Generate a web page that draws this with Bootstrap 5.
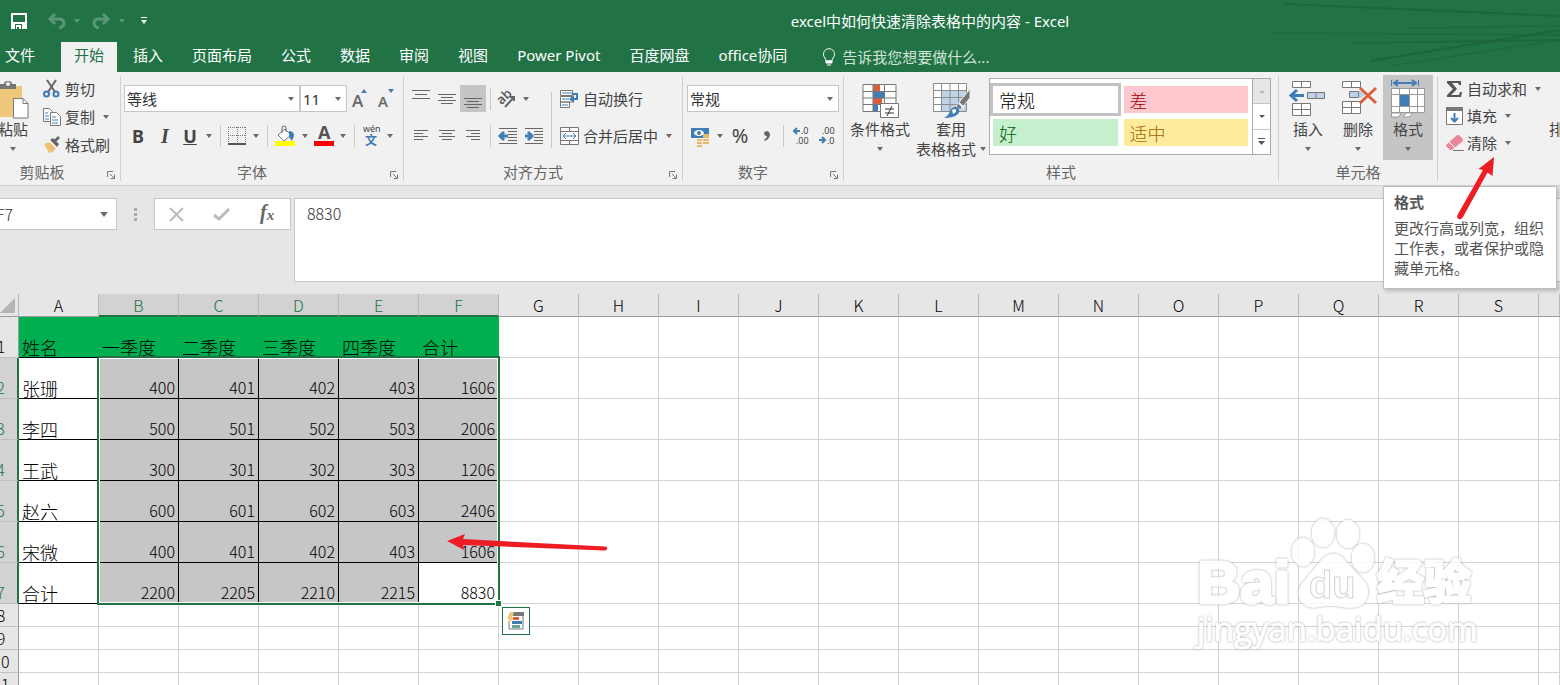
<!DOCTYPE html>
<html lang="zh-CN">
<head>
<meta charset="utf-8">
<meta name="viewport" content="width=device-width, initial-scale=1">
<title>excel中如何快速清除表格中的内容 - Excel</title>
<link href="https://cdn.jsdelivr.net/npm/bootstrap@5.3.0/dist/css/bootstrap.min.css" rel="stylesheet">
<style>
  :root { --xl-green:#217346; --xl-ink:#444; --xl-line:#d4d4d4; --xl-blue:#3f7cb8; }
  body { font-family:"Noto Sans","Noto Sans CJK SC",sans-serif; font-size:15px; line-height:20px; color:var(--xl-ink); background:#fff; }
  .app { min-height:100vh; overflow:hidden; }
  button { font:inherit; color:inherit; background:none; border:0; padding:0; }
  svg { display:block; overflow:visible; flex:none; }
  svg text { font-family:"Open Sans","Noto Sans CJK SC",sans-serif; }

  /* title bar and tabs */
  .titlebar { background:var(--xl-green); color:#fff; }
  .title-row { height:42px; }
  .quick { flex:0 0 300px; padding-left:11px; }
  .streaks { top:0; right:0; }
  .tabs { height:30px; gap:3px; }
  .tabs a, .tell { color:#fff; text-decoration:none; padding:0 13px; line-height:27px; }
  .tabs a.file { padding:0 23px 0 5px; }
  .tabs a.active { background:#f1f1f1; color:var(--xl-green); }
  .tabs .tell { color:#cfe3d7; gap:6px; padding-left:19px; }

  /* ribbon */
  .ribbon { background:#f1f1f1; height:114px; border-bottom:1px solid #d2d2d2; }
  .grp { position:relative; padding-top:3px; border-right:1px solid transparent; flex:none; }
  .grp::after { content:""; position:absolute; right:-1px; top:4px; bottom:4px; width:1px; background:#d0d0d0; }
  .grp-body { height:85px; }
  .grp-name { color:#666; line-height:24px; text-align:center; }
  .has-launch .grp-name { padding-right:20px; }
  .g-clip.has-launch .grp-name { padding-right:36px; }
  .launch { position:absolute; right:5px; bottom:6px; }
  .g-clip { width:121px; } .g-font { width:283px; } .g-align { width:279px; }
  .g-num { width:161px; } .g-style { width:435px; } .g-cells { width:159px; }
  .g-style .grp-body { padding-left:1px; padding-right:7px; }
  .g-edit::after { display:none; }
  .two-rows { padding:5px 4px 0 3px; }
  .g-align .two-rows, .g-num .two-rows { padding-left:4px; }
  .tool-row { height:37px; display:flex; align-items:center; }
  .tb { height:27px; width:26px; display:flex; align-items:center; justify-content:center; flex:none; }
  .tb-24 { width:24px; }
  .tb-28 { width:28px; }
  .tb.on { background:#c5c5c5; }
  .drop { width:14px; height:27px; display:flex; align-items:center; justify-content:center; flex:none; }
  .drop::before, .car::after { content:""; border:3px solid transparent; border-top:4px solid #6a6a6a; border-bottom:0; }
  .sep { width:9px; height:22px; flex:none; display:flex; justify-content:center; }
  .sep::before { content:""; width:1px; background:#c8c8c8; }
  .sep-long { height:56px; align-self:center; }
  .lb { display:flex; align-items:center; height:28px; gap:4px; white-space:nowrap; }
  .g-edit .lb, .g-edit .drop { height:27px; }
  .big { display:flex; flex-direction:column; align-items:center; width:50px; height:85px; padding-top:5px; white-space:nowrap; flex:none; line-height:19px; }
  .big svg { margin-bottom:2px; height:38px; }
  .big .car { height:20px; display:flex; align-items:center; }
  .big.on { background:#c5c5c5; }
  .big.w70 { width:70px; } .big.w72 { width:72px; }
  .paste { width:36px; margin-left:-5px; }
  .field { height:27px; border:1px solid #c6c6c6; border-radius:0; background-color:#fff; color:#333; font-size:15px; line-height:20px; padding:0 18px 0 2px;
    appearance:none; background-repeat:no-repeat; background-position:right 5px center; background-size:6px 4px;
    background-image:url("data:image/svg+xml,%3Csvg xmlns='http://www.w3.org/2000/svg' viewBox='0 0 6 4'%3E%3Cpath d='M0 0h6L3 4z' fill='%236a6a6a'/%3E%3C/svg%3E"); }
  .f-family { width:176px; flex:none; } .f-size { width:47px; flex:none; }
  .glyph { font-size:18px; font-weight:700; }
  .glyph-i { font-family:"Liberation Serif",serif; font-size:20px; font-style:italic; }
  .gallery { width:282px; height:77px; margin-top:3px; border:1px solid #ababab; background:#fff; }
  .swatches { display:grid; grid-template-columns:1fr 1fr; gap:6px; padding:7px 4px 7px 3px; align-content:start; }
  .swatch { height:27px; padding-left:6px; text-align:left; font-size:18px; font-weight:300; line-height:24px; color:#000; font-family:"Noto Sans CJK SC",sans-serif; }
  .swatch.sel { outline:3px solid #c2c2c2; }
  .sw-bad { background:#ffc7ce; color:#9c0006; } .sw-good { background:#c6efce; color:#006100; } .sw-mid { background:#ffeb9c; color:#9c6500; }
  .scroller { width:18px; border-left:1px solid #ababab; }
  .scroller button { flex:1; display:flex; align-items:center; justify-content:center; border-bottom:1px solid #c6c6c6; }
  .scroller button:last-child { border:0; }
  .scroller .dim { background:#e6e6e6; }
  .tip { left:104px; top:114px; width:174px; padding:5px 10px 10px; background:#fff; border:1px solid #bebebe; box-shadow:2px 2px 4px rgba(0,0,0,.2); z-index:5; color:#555; }
  .tip h2 { font-size:15px; line-height:20px; font-weight:700; margin:0 0 6px; }
  .tip p { margin:0; }
  .pointer { position:absolute; z-index:8; pointer-events:none; }

  /* formula bar */
  .fbar { background:#e6e6e6; height:108px; padding-top:12px; }
  .namebox { width:122px; margin-left:-5px; height:32px; font-family:"Noto Sans CJK SC",sans-serif; font-size:16px; padding-left:0; font-weight:300; background-position:right 8px center; background-size:8px 5px; }
  .dots { width:37px; height:32px; }
  .fx { width:137px; height:32px; background:#fff; border:1px solid #c6c6c6; }
  .formula { flex:1; min-width:0; height:84px; margin-left:3px; padding:3px 12px; border:1px solid #c6c6c6; border-right:0; resize:none; font-family:"Noto Sans CJK SC",sans-serif; font-weight:300; font-size:16px; line-height:22px; color:#333; }

  /* worksheet */
  .sheet-area { position:relative; }
  .sheet { table-layout:fixed; border-collapse:separate; border-spacing:0; width:calc(100% + 16px); margin-left:-16px; font-family:"Noto Sans CJK SC",sans-serif; font-weight:300; font-size:16px; line-height:22px; color:#000; }
  .sheet .c-num { width:35px; } .sheet .c-col { width:80px; }
  .sheet th, .sheet td { padding:0 3px; border:0 solid var(--xl-line); border-width:0 1px 1px 0; font-weight:inherit; vertical-align:bottom; white-space:nowrap; overflow:hidden; }
  .sheet thead th { height:23px; line-height:21px; background:#e6e6e6; text-align:center; vertical-align:top; padding-top:1px; border-color:#b8b8b8; border-bottom-color:#9b9b9b; position:relative; }
  .sheet thead th.hot { line-height:20px; background:#d2d2d2; color:var(--xl-green); border-bottom:2px solid var(--xl-green); }
  .sheet tbody th { height:23px; background:#e6e6e6; text-align:center; border-right-color:#9b9b9b; border-bottom-color:#c0c0c0; }
  .sheet .tall th, .sheet .tall td { height:41px; }
  .sheet .hot-row th { background:#d2d2d2; color:var(--xl-green); border-right:2px solid var(--xl-green); }
  .sheet td.word { font-size:18px; line-height:20px; }
  .sheet td.fill { background:#00b050; border-right-color:#00b050; border-bottom-color:#000; }
  .sheet td.boxed { border-color:#000; }
  .sheet td.numv { text-align:right; }
  .sheet td.pick { background:#c6c6c6; }
  .corner { position:absolute; right:3px; bottom:3px; }
  .range { left:97px; top:62px; width:403px; height:249px; border:2px solid var(--xl-green); box-shadow:inset 0 0 0 1px #fff; pointer-events:none; }
  .range::after { content:""; position:absolute; right:-4px; bottom:-4px; width:5px; height:5px; background:var(--xl-green); border:1px solid #fff; box-sizing:content-box; }
  .quick-tag { position:absolute; left:502px; top:313px; width:28px; height:28px; border:1px solid var(--xl-green); background:#fff; display:flex; align-items:center; justify-content:center; }
  .brand { position:absolute; right:80px; top:222px; pointer-events:none; opacity:.85; filter:drop-shadow(0 0 1px #999); }
  .brand text { font-weight:700; font-family:"Liberation Sans","Noto Sans CJK SC",sans-serif; }
  .brand .brand-url { font-family:"Open Sans",sans-serif; font-weight:400; }
</style>
</head>
<body>
<div class="app d-flex flex-column">

  <header class="titlebar position-relative">
    <svg class="streaks position-absolute" width="290" height="72" viewBox="0 0 290 72" fill="none" stroke="#1c613b" aria-hidden="true">
      <path d="M15 4 290 16" stroke-width="2" opacity=".8"/><path d="M2 33 290 35" stroke-width="2" opacity=".5"/><path d="M138 28 290 26" opacity=".7"/><path d="M82 43 290 40" stroke-width="2" opacity=".7"/><path d="M100 61 290 30" stroke-width="2" opacity=".8"/><path d="M120 66 290 40" opacity=".7"/>
    </svg>
    <div class="title-row d-flex align-items-center">
      <div class="quick d-flex align-items-center">
        <button aria-label="保存"><svg width="16" height="16" fill="none"><path d="M0 0h16v16H0z" fill="#fff"/><path d="M2 2h12v7H2zM4 11h7v5H4z" fill="#217346"/><path d="M5 12h5v4H8v-2H6v2H5z" fill="#fff"/></svg></button>
        <button class="ms-3 ps-1" aria-label="撤消"><svg width="19" height="16" fill="none" stroke="#599676" stroke-width="3"><path d="M3 6h9q5 0 5 4t-5 5"/><path d="M8 1 3 6l5 5"/></svg></button>
        <span class="ms-2"><svg width="6" height="4"><path d="M0 0h6L3 4z" fill="#599676"/></svg></span>
        <button class="ms-2 ps-1" aria-label="恢复"><svg width="19" height="16" fill="none" stroke="#599676" stroke-width="3"><path d="M16 6H7q-5 0-5 4t5 5"/><path d="m11 1 5 5-5 5"/></svg></button>
        <span class="ms-2"><svg width="6" height="4"><path d="M0 0h6L3 4z" fill="#599676"/></svg></span>
        <button class="ms-3" aria-label="自定义快速访问工具栏"><svg width="6" height="8"><path d="M0 0h6v1H0zM0 3h6L3 7z" fill="#fff"/></svg></button>
      </div>
      <div class="flex-fill text-center text-truncate">excel中如何快速清除表格中的内容 - Excel</div>
    </div>
    <nav class="tabs d-flex text-nowrap" aria-label="功能区选项卡">
      <a href="#" class="file">文件</a><a href="#" class="active">开始</a><a href="#">插入</a><a href="#">页面布局</a><a href="#">公式</a><a href="#">数据</a><a href="#">审阅</a><a href="#">视图</a><a href="#">Power Pivot</a><a href="#">百度网盘</a><a href="#">office协同</a>
      <button class="tell d-flex align-items-center">
        <svg width="14" height="18" fill="none" stroke="#fff"><path d="M4 13q0-2-2-4.500a5.500 5.500 0 1 1 10 0q-2 2.500-2 4.500z"/><path d="M4 13h6v2H4zM5 17h4" fill="#fff"/></svg>
        告诉我您想要做什么...</button>
    </nav>
  </header>

  <section class="ribbon d-flex" aria-label="开始">
    <div class="grp g-clip has-launch">
      <div class="grp-body d-flex">
        <button class="big paste">
          <svg width="36" height="38"><path d="M-1 6h28v31H-1z" fill="#eec77b"/><path d="M5 4h4q0-3 4-3t4 3h4v5H5z" fill="#777"/><circle cx="13" cy="4" r="2" fill="#f1f1f1"/><path d="M18.500 18.500h9.500l5 5v14.500H18.500z" fill="#fff" stroke="#777"/><path d="M28 18.500v5h5" fill="none" stroke="#777"/></svg>
          粘贴<span class="car"></span></button>
        <div class="d-flex flex-column ms-2 ps-1">
          <button class="lb"><svg width="18" height="18" fill="none" stroke="#666" stroke-width="2"><path d="m4 0 8 12M13 0 5 12"/><circle cx="3.500" cy="14" r="2.500" stroke="#3f7cb8"/><circle cx="13" cy="14" r="2.500" stroke="#3f7cb8"/></svg>剪切</button>
          <span class="d-flex"><button class="lb"><svg width="18" height="18" fill="#fff" stroke="#777"><path d="M.5.500h6l3 3v10h-9z"/><path d="M7.500 4.500h6l4 4v9h-10z"/><path d="M2 5h3M2 8h4M2 11h4M9 9h4M9 12h6M9 15h6" stroke="#3f7cb8"/></svg>复制</button><button class="drop ms-1" aria-label="复制选项"></button></span>
          <button class="lb"><svg width="18" height="18"><path d="m1 8 6-2 6 6-3 4-4 1z" fill="#eec077"/><path d="m6 5 3-2 6 6-2 3z" fill="#fff"/><path d="m7 4 3-2 6 6-2 3zM11 4l4-4 2 2-4 4z" fill="#666"/></svg>格式刷</button>
        </div>
      </div>
      <div class="grp-name">剪贴板</div>
      <button class="launch" aria-label="剪贴板设置"><svg width="8" height="8" fill="none" stroke="#777"><path d="M.5 6V.5H6M3 3l4 4M7.500 3.500v4h-4"/></svg></button>
    </div>

    <div class="grp g-font has-launch">
      <div class="grp-body two-rows">
        <div class="tool-row">
          <select class="field f-family" aria-label="字体"><option>等线</option></select>
          <select class="field f-size" aria-label="字号"><option>11</option></select>
          <button class="tb" aria-label="增大字号"><svg width="18" height="20"><text x="1" y="18" font-size="17" font-weight="600" fill="#666">A</text><path d="m10 4 3-4 3 4z" fill="#3f7cb8"/></svg></button>
          <button class="tb" aria-label="减小字号"><svg width="18" height="20"><text x="1" y="18" font-size="15" font-weight="600" fill="#666">A</text><path d="m11 0 3 4 3-4z" fill="#3f7cb8"/></svg></button>
        </div>
        <div class="tool-row">
          <button class="tb tb-28 glyph" aria-label="加粗">B</button><button class="tb glyph glyph-i" aria-label="倾斜">I</button><button class="tb tb-24 glyph text-decoration-underline" aria-label="下划线">U</button><button class="drop" aria-label="下划线选项"></button><span class="sep"></span>
          <button class="tb tb-24" aria-label="边框"><svg width="18" height="18" fill="none" stroke="#777" stroke-dasharray="1 1"><path d="M.5 0v17M9.500 0v17M17.500 0v17M0 .5h18M0 8.500h18"/><path d="M0 17h18" stroke="#555" stroke-width="2" stroke-dasharray="none"/></svg></button><button class="drop" aria-label="边框选项"></button><span class="sep"></span>
          <button class="tb" aria-label="填充颜色"><svg width="20" height="20"><path d="M10 3 3 9l6 6 7-6z" fill="#fff" stroke="#777"/><path d="M7 7V2q0-2 2-2t2 2v4" fill="none" stroke="#666"/><path d="M14 5q5 0 5 5l-2 5-3-4z" fill="#3f7cb8"/><path d="M0 15h20v5H0z" fill="#ff0"/></svg></button><button class="drop" aria-label="填充颜色选项"></button>
          <button class="tb tb-24" aria-label="字体颜色"><svg width="20" height="20"><text x="4" y="13" font-size="18" font-weight="700" fill="#555">A</text><path d="M0 15h20v5H0z" fill="red"/></svg></button><button class="drop" aria-label="字体颜色选项"></button><span class="sep"></span>
          <button class="tb tb-24" aria-label="拼音指南"><svg width="18" height="20"><text x="1" y="6" font-size="9" fill="#333">wén</text><text x="3" y="19" font-size="12" font-weight="700" fill="#3f7cb8">文</text></svg></button><button class="drop" aria-label="拼音选项"></button>
        </div>
      </div>
      <div class="grp-name">字体</div>
      <button class="launch" aria-label="字体设置"><svg width="8" height="8" fill="none" stroke="#777"><path d="M.5 6V.5H6M3 3l4 4M7.500 3.500v4h-4"/></svg></button>
    </div>

    <div class="grp g-align has-launch">
      <div class="grp-body two-rows d-flex">
        <div>
          <div class="tool-row">
            <button class="tb" aria-label="顶端对齐"><svg width="18" height="18" stroke="#666"><path d="M0 .5h18M3 4.500h12M0 8.500h18"/></svg></button>
            <button class="tb" aria-label="垂直居中"><svg width="18" height="18" stroke="#666"><path d="M0 4.500h18M3 7.500h12M0 10.500h18M3 13.500h12"/></svg></button>
            <button class="tb on" aria-label="底端对齐"><svg width="18" height="18" stroke="#666"><path d="M0 8.500h18M3 11.500h12M0 14.500h18M3 17.500h12"/></svg></button><span class="sep"></span>
            <button class="tb tb-24" aria-label="方向"><svg width="20" height="20"><text x="2" y="14" font-size="13" font-weight="600" fill="#555" transform="rotate(-45 6 12)">ab</text><path d="m8 18 9-10M13 8h4v4" fill="none" stroke="#666" stroke-width="2"/></svg></button><button class="drop" aria-label="方向选项"></button>
          </div>
          <div class="tool-row">
            <button class="tb" aria-label="左对齐"><svg width="14" height="12" stroke="#666"><path d="M0 .5h14M0 3.500h9M0 6.500h14M0 9.500h9"/></svg></button>
            <button class="tb" aria-label="居中"><svg width="16" height="12" stroke="#666"><path d="M0 .5h16M3 3.500h10M0 6.500h16M3 9.500h10"/></svg></button>
            <button class="tb" aria-label="右对齐"><svg width="14" height="12" stroke="#666"><path d="M0 .5h14M5 3.500h9M0 6.500h14M5 9.500h9"/></svg></button><span class="sep"></span>
            <button class="tb" aria-label="减少缩进量"><svg width="18" height="16" stroke="#666"><path d="M0 .5h18M9 3.500h9M9 6.500h9M9 9.500h9M9 12.500h9M0 15.500h18"/><path d="M9 8H2M5 4 1 8l4 4" fill="none" stroke="#3f7cb8" stroke-width="3"/></svg></button>
            <button class="tb" aria-label="增加缩进量"><svg width="18" height="16" stroke="#666"><path d="M0 .5h18M9 3.500h9M9 6.500h9M9 9.500h9M9 12.500h9M0 15.500h18"/><path d="M0 8h7M3 4l4 4-4 4" fill="none" stroke="#3f7cb8" stroke-width="3"/></svg></button>
          </div>
        </div>
        <span class="sep sep-long"></span>
        <div class="ps-1">
          <div class="tool-row"><button class="lb"><svg width="19" height="18" fill="#fff" stroke="#777"><path d="M.5.500h12v5H.5zM.5 6.500h12v5.500H.5zM.5 12h9v5.500h-9z"/><path d="M2 3h11M2 9h7M2 15h6" stroke="#3f7cb8"/><path d="M13 4h4v5h-5" stroke="#3f7cb8" fill="none" stroke-width="2"/><path d="m14 5-5 4 5 4z" fill="#3f7cb8" stroke="none"/></svg>自动换行</button></div>
          <div class="tool-row"><button class="lb"><svg width="19" height="18" fill="#fff" stroke="#777"><path d="M.5.500h18v17H.5zM.5 4.500h18M.5 13.500h18M9.500.500v4M9.500 13.500v4"/><path d="M3 9h13M6 6 3 9l3 3M13 6l3 3-3 3" fill="none" stroke="#3f7cb8"/></svg>合并后居中</button><button class="drop ms-1" aria-label="合并选项"></button></div>
        </div>
      </div>
      <div class="grp-name">对齐方式</div>
      <button class="launch" aria-label="对齐设置"><svg width="8" height="8" fill="none" stroke="#777"><path d="M.5 6V.5H6M3 3l4 4M7.500 3.500v4h-4"/></svg></button>
    </div>

    <div class="grp g-num has-launch">
      <div class="grp-body two-rows">
        <div class="tool-row"><select class="field w-100" aria-label="数字格式"><option>常规</option></select></div>
        <div class="tool-row">
          <button class="tb" aria-label="会计数字格式"><svg width="20" height="20"><path d="M1 2h18v10H1z" fill="#3f7cb8"/><ellipse cx="9" cy="7" rx="5" ry="3" fill="#fff"/><circle cx="9" cy="7" r="2" fill="#3f7cb8"/><path d="M13 9h6M13 11h6M13 14h6M13 17h6M7 14h5M7 17h5M7 20h5" stroke="#e8b864" stroke-width="2"/></svg></button><button class="drop" aria-label="会计格式选项"></button>
          <button class="tb" aria-label="百分比样式"><span class="fs-5">%</span></button>
          <button class="tb" aria-label="千位分隔样式"><svg width="7" height="10"><path d="M1 2q1-2 3-2t3 3q0 5-5 7l-1-1q3-2 3-4-3 0-3-3" fill="#666"/></svg></button><span class="sep"></span>
          <button class="tb" aria-label="增加小数位数"><svg width="16" height="18"><text x="8" y="7" font-size="9" fill="#333">.0</text><text x="3" y="17" font-size="9" fill="#333">.00</text><path d="M7 4H2M4 1 1 4l3 3" stroke="#3f7cb8" stroke-width="2" fill="none"/></svg></button>
          <button class="tb" aria-label="减少小数位数"><svg width="16" height="18"><text x="3" y="7" font-size="9" fill="#333">.00</text><text x="8" y="17" font-size="9" fill="#333">.0</text><path d="M0 13h5M3 10l3 3-3 3" stroke="#3f7cb8" stroke-width="2" fill="none"/></svg></button>
        </div>
      </div>
      <div class="grp-name">数字</div>
      <button class="launch" aria-label="数字设置"><svg width="8" height="8" fill="none" stroke="#777"><path d="M.5 6V.5H6M3 3l4 4M7.500 3.500v4h-4"/></svg></button>
    </div>

    <div class="grp g-style">
      <div class="grp-body d-flex">
        <button class="big w70">
          <svg width="40" height="38"><path d="M3 4.500h33v27H3z" fill="#fff"/><path d="M13 5h7v6h-7zM13 18h9v6h-9z" fill="#db5f3f"/><path d="M13 11h11v7H13zM13 25h5v6h-5z" fill="#3f7cb8"/><path d="M3 4.500h33v27H3zM13 4v27M24.500 4v27M3 11.500h33M3 18h33M3 24.500h33" fill="none" stroke="#777"/><path d="M20.500 23.500h18v14h-18z" fill="#fff" stroke="#777"/><path d="M25 29h9M25 33h9M32 26l-5 10" stroke="#333"/></svg>
          条件格式<span class="car"></span></button>
        <button class="big w72">
          <svg width="38" height="38"><path d="M1.500 3.500h33v28h-33z" fill="#fff"/><path d="M9 10h25v21H9z" fill="#bfd3e8"/><path d="M1.500 3.500h33v28h-33zM9.500 3v28M18 3v28M26.500 3v28M1 10.500h33M1 17.500h33M1 24.500h33" fill="none" stroke="#8b8b8b"/><path d="M38 9v9L28 30l-4-4z" fill="#777" stroke="#f1f1f1"/><path d="m27 23 5 5" stroke="#f1f1f1" stroke-width="2"/><path d="M12 38q5-3 6-7 3-5 7-4 4 3 1 7-4 4-14 4z" fill="#3f7cb8"/><path d="M20 30q3-2 4 0t-3 4z" fill="#fff"/></svg>
          套用<span class="d-flex align-items-center">表格格式<span class="car ms-1"></span></span></button>
        <div class="gallery d-flex ms-auto">
          <div class="swatches flex-fill"><button class="swatch sel">常规</button><button class="swatch sw-bad">差</button><button class="swatch sw-good">好</button><button class="swatch sw-mid">适中</button></div>
          <div class="scroller d-flex flex-column">
            <button class="dim" aria-label="上一行"><svg width="6" height="3"><path d="m0 3 3-3 3 3z" fill="#b5b5b5"/></svg></button>
            <button aria-label="下一行"><svg width="6" height="3"><path d="m0 0 3 3 3-3z" fill="#555"/></svg></button>
            <button aria-label="其他"><svg width="7" height="7"><path d="M0 0h7v1H0zM0 3h7L3.500 7z" fill="#555"/></svg></button>
          </div>
        </div>
      </div>
      <div class="grp-name">样式</div>
    </div>

    <div class="grp g-cells">
      <div class="grp-body d-flex ps-1">
        <button class="big"><svg width="38" height="38" fill="#fff" stroke="#777"><path d="M3.500 1.500h18v6h-18zM12.500 1.500v6M3.500 23.500h18v12h-18zM12.500 23.500v12M3.500 29.500h18"/><path d="M18.500 12.500h17v6h-17zM27 12.500v6" fill="#bfd3e8"/><path d="M15 15.500H3M8 10l-6 5.500L8 21" fill="none" stroke="#3f7cb8" stroke-width="3"/></svg>插入<span class="car"></span></button>
        <button class="big"><svg width="38" height="38" fill="#fff" stroke="#777"><path d="M3.500 1.500h18v6h-18zM12.500 1.500v6M3.500 21.500h18v12h-18zM12.500 21.500v12M3.500 27.500h18"/><path d="M10.500 11.500h9v6h-9z" fill="#bfd3e8"/><path d="M20 11h2l4 4-4 3h-2z" fill="#bfd3e8" stroke="none"/><path d="m21 8 16 15M37 8 21 23" stroke="#db5f3f" stroke-width="3"/></svg>删除<span class="car"></span></button>
        <button class="big on"><svg width="38" height="38" fill="#fff" stroke="#999"><path d="M2.500 33v4h7l3-4zM14 37l3-4h7l-4 4z"/><path d="M2.500 8.500h33v24h-33zM10.500 8.500v24M20.500 8.500v24M28.500 8.500v24M2.500 14.500h33M2.500 26.500h33"/><path d="M11 15h9v11h-9z" fill="#3f7cb8" stroke="none"/><path d="M2.500 0v6M29.500 0v6" stroke="#3f7cb8"/><path d="M6 3h20M9 0 5 3l4 3M23 0l4 3-4 3" fill="none" stroke="#3f7cb8" stroke-width="2"/></svg>格式<span class="car"></span></button>
      </div>
      <div class="grp-name">单元格</div>
      <div class="tip position-absolute" role="tooltip"><h2>格式</h2><p>更改行高或列宽，组织工作表，或者保护或隐藏单元格。</p></div>
    </div>

    <div class="grp g-edit flex-fill">
      <div class="grp-body d-flex ps-2">
        <div class="d-flex flex-column">
          <span class="d-flex"><button class="lb"><svg width="17" height="16"><path d="M1 0h14v4h-2l-1-2H6l5 6-6 6h8l1-3h2l-1 5H1v-2l6-6-6-6z" fill="#555"/></svg>自动求和</button><button class="drop ms-1" aria-label="求和选项"></button></span>
          <button class="lb"><svg width="17" height="18"><path d="M.5.500h16v17H.5z" fill="#fff" stroke="#777"/><path d="M0 0h17v4H0z" fill="#777"/><path d="M8.500 6v8M5 11l3.500 3.500L12 11" fill="none" stroke="#3f7cb8" stroke-width="2"/></svg>填充<span class="drop"></span></button>
          <button class="lb"><svg width="17" height="17"><path d="M0 11 11 1h2l4 4v2L6 16H4l-4-4z" fill="#e98a9c"/><path d="m3 8 6 6" stroke="#fff"/><path d="M7 16.500h11" stroke="#777"/></svg>清除<span class="drop"></span></button>
        </div>
        <button class="big ms-1 align-items-start" aria-label="排序"><svg width="15" height="38"></svg>排</button>
      </div>
      <svg class="pointer" style="left:18px;top:85px" width="40" height="64" fill="#ee1c24"><path d="M38 0 36.500 19 31.500 15.500 7 60Q4 64 1.500 61 .500 59 2 57L27 13 22.500 12z"/></svg>
    </div>
  </section>

  <section class="fbar d-flex" aria-label="编辑栏">
    <select class="field namebox" aria-label="名称框"><option>F7</option></select>
    <span class="dots d-flex align-items-center justify-content-center"><svg width="3" height="13" fill="#aaa"><path d="M0 0h3v3H0zM0 5h3v3H0zM0 10h3v3H0z"/></svg></span>
    <div class="fx d-flex align-items-center justify-content-around">
      <button aria-label="取消"><svg width="15" height="13" stroke="#bbb" stroke-width="2"><path d="m1 0 13 13M14 0 1 13"/></svg></button>
      <button aria-label="输入"><svg width="17" height="13" fill="none" stroke="#bbb" stroke-width="3"><path d="m1 7 5 4L16 1"/></svg></button>
      <button aria-label="插入函数"><svg width="17" height="20"><text x="1" y="15" font-size="20" font-style="italic" font-weight="700" fill="#666" style="font-family:'Liberation Serif',serif">f<tspan font-size="15" dy="1">x</tspan></text></svg></button>
    </div>
    <textarea class="formula" aria-label="公式">8830</textarea>
  </section>

  <main class="sheet-area flex-fill">
    <table class="sheet">
      <colgroup id="cols"><col class="c-num"></colgroup>
      <thead><tr id="letters"><th><svg class="corner" width="15" height="15"><path d="M15 0v15H0z" fill="#b4b4b4"/></svg></th></tr></thead>
      <tbody id="rows"></tbody>
    </table>
    <div class="range position-absolute"></div>
    <button class="quick-tag" aria-label="快速分析"><svg width="18" height="18"><path d="M4 1h12v16H2V9" fill="none" stroke="#777"/><path d="M6 0h11v4H6z" fill="#777"/><path d="M6 5h6v3H6z" fill="#db5f3f"/><path d="M5 9h10v3H5z" fill="#3f7cb8"/><path d="M5 13h8v3H5z" fill="#67a88c"/><path d="M3 0h4L5 5h2L1 13l1-6H0z" fill="#eec77b"/></svg></button>
    <svg class="pointer" style="left:446px;top:238px" width="164" height="24" fill="#ee1c24"><path d="M1 9 19 2 17 7 159 14.500Q162 15 161 17 160 19 158 18.500L17 13 18 18z"/></svg>
    <svg class="brand" width="286" height="134" fill="#fff" stroke="#fff" stroke-width="3" stroke-linejoin="round">
      <text x="3" y="87" font-size="60">Bai</text>
      <g stroke-width="1"><ellipse cx="109" cy="36" rx="11" ry="14"/><ellipse cx="129" cy="17" rx="11" ry="14"/><ellipse cx="154" cy="18" rx="11" ry="14"/><ellipse cx="169" cy="42" rx="11" ry="14"/>
      <path d="M139 38Q147 38 153 47L170 65Q178 76 170 87 162 93 150 91 139 88 128 90 112 94 107 85 101 74 112 63L125 47Q132 38 139 38z"/></g>
      <text x="115" y="82" font-size="38" stroke="#ccc" stroke-width="1">du</text>
      <text x="183" y="83" font-size="47">经验</text>
      <text class="brand-url" x="3" y="125" font-size="33" stroke-width="1">jingyan.baidu.com</text>
    </svg>
  </main>
</div>

<script src="https://cdn.jsdelivr.net/npm/bootstrap@5.3.0/dist/js/bootstrap.bundle.min.js"></script>
<script>
  const letters = 'ABCDEFGHIJKLMNOPQRS'.split('');
  const data = [
    ['姓名', '一季度', '二季度', '三季度', '四季度', '合计'],
    ['张珊', 400, 401, 402, 403, 1606],
    ['李四', 500, 501, 502, 503, 2006],
    ['王武', 300, 301, 302, 303, 1206],
    ['赵六', 600, 601, 602, 603, 2406],
    ['宋微', 400, 401, 402, 403, 1606],
    ['合计', 2200, 2205, 2210, 2215, 8830]
  ];
  document.getElementById('cols').insertAdjacentHTML('beforeend', '<col class="c-col">'.repeat(letters.length) + '<col>');
  document.getElementById('letters').insertAdjacentHTML('beforeend',
    letters.map((l, i) => `<th class="${i > 0 && i < 6 ? 'hot' : ''}">${l}</th>`).join('') + '<th></th>');
  let html = '';
  for (let r = 0; r < 11; r++) {
    const row = data[r] || [];
    html += `<tr class="${r < 7 ? 'tall' : ''} ${r > 0 && r < 7 ? 'hot-row' : ''}"><th>${r + 1}</th>`;
    for (let c = 0; c <= letters.length; c++) {
      const v = row[c];
      let cls = '';
      if (v !== undefined) {
        cls = typeof v === 'number' ? 'numv boxed' : 'word';
        if (r === 0) cls += ' fill';
        else {
          if (c === 0) cls += ' boxed';
          else if (!(r === 6 && c === 5)) cls += ' pick';
        }
      }
      html += `<td class="${cls}">${v ?? ''}</td>`;
    }
    html += '</tr>';
  }
  document.getElementById('rows').innerHTML = html;
</script>
</body>
</html>
